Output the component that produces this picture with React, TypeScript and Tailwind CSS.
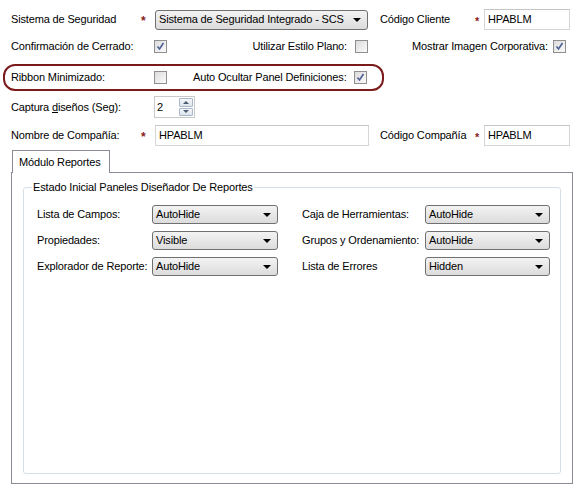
import React from 'react';

const font = { fontFamily: '"Liberation Sans", Arial, sans-serif' };

function Star() {
  return <span className="w-[14px] text-[#8a1c1c] font-bold text-[12px] leading-none pt-[3px]">*</span>;
}

function Check({ checked }: { checked?: boolean }) {
  return (
    <span className="w-[13px] h-[13px] border border-[#8f8f8f] bg-gradient-to-br from-[#dcdcdc] to-[#fbfbfb] flex items-center justify-center shrink-0">
      {checked && (
        <svg width="9" height="9" viewBox="0 0 9 9">
          <path d="M1.5 4.5 L3.5 7 L7.5 1" fill="none" stroke="#4d5f95" strokeWidth="1.6" />
        </svg>
      )}
    </span>
  );
}

function Select({ value, w, h = 20 }: { value: string; w: string; h?: number }) {
  return (
    <div
      className={`${w} flex items-center border border-[#707070] rounded-[3px] bg-gradient-to-b from-[#f3f3f3] to-[#dcdcdc] pl-[3px] pr-[6px] shrink-0`}
      style={{ height: h }}
    >
      <span className="flex-1">{value}</span>
      <svg width="8" height="4" viewBox="0 0 8 4" className="ml-[4px] shrink-0">
        <path d="M0 0 H8 L4 4 Z" fill="#000" />
      </svg>
    </div>
  );
}

function TextBox({ value, w }: { value: string; w: string }) {
  return (
    <div className={`${w} h-[21px] border border-[#d6d6d6] border-t-[#c5c5c5] bg-white flex items-center pl-[3px] shrink-0`}>
      <span>{value}</span>
    </div>
  );
}

export default function App() {
  return (
    <div className="w-[580px] h-[493px] bg-white text-[11px] tracking-[-0.15px] text-black overflow-hidden whitespace-nowrap" style={font}>
      {/* Row 1 */}
      <div className="flex items-center h-[21px] mt-[9px] pl-[11px]">
        <span className="w-[130px]">Sistema de Seguridad</span>
        <Star />
        <Select value="Sistema de Seguridad Integrado - SCS" w="w-[213px]" />
        <span className="ml-[12px] w-[95px]">Código Cliente</span>
        <span className="w-[9px] text-[#8a1c1c] font-bold leading-none pt-[3px]">*</span>
        <TextBox value="HPABLM" w="w-[86px]" />
      </div>

      {/* Row 2 */}
      <div className="flex items-center h-[14px] mt-[9px] pl-[11px]">
        <span className="w-[143px]">Confirmación de Cerrado:</span>
        <Check checked />
        <span className="w-[188px] text-right pr-[8px]">Utilizar Estilo Plano:</span>
        <Check />
        <span className="w-[185px] text-right pr-[5px]">Mostrar Imagen Corporativa:</span>
        <Check checked />
      </div>

      {/* Row 3 */}
      <div className="mt-[11px] ml-[3px] w-[381px] h-[27px] border-2 border-[#7b1a1a] rounded-[12px] flex items-center pl-[6px]">
        <span className="w-[143px]">Ribbon Minimizado:</span>
        <Check />
        <span className="ml-[26px] w-[161px]">Auto Ocultar Panel Definiciones:</span>
        <Check checked />
      </div>

      {/* Row 4 */}
      <div className="flex items-center h-[22px] mt-[5px] pl-[11px]">
        <span className="w-[143px]">
          Captura <span className="underline">d</span>iseños (Seg):
        </span>
        <div className="w-[41px] h-[22px] border border-[#c9c9c9] flex items-center pl-[2px] pr-[1px]">
          <span className="flex-1">2</span>
          <div className="flex flex-col w-[14px] h-[18px] gap-[1px]">
            {[0, 1].map((i) => (
              <div key={i} className="flex-1 border border-[#a9b7c9] rounded-[1px] bg-gradient-to-b from-[#f5f7fa] to-[#dde4ec] flex items-center justify-center">
                <svg width="6" height="3" viewBox="0 0 6 3">
                  <path d={i === 0 ? 'M0 3 H6 L3 0 Z' : 'M0 0 H6 L3 3 Z'} fill="#4a5a73" />
                </svg>
              </div>
            ))}
          </div>
        </div>
      </div>

      {/* Row 5 */}
      <div className="flex items-center h-[21px] mt-[7px] pl-[11px]">
        <span className="w-[130px]">Nombre de Compañía:</span>
        <Star />
        <TextBox value="HPABLM" w="w-[214px]" />
        <span className="ml-[11px] w-[95px]">Código Compañía</span>
        <span className="w-[9px] text-[#8a1c1c] font-bold leading-none pt-[3px]">*</span>
        <TextBox value="HPABLM" w="w-[86px]" />
      </div>

      {/* Tabs */}
      <div className="ml-[11px] mt-[3px] w-[562px]">
        <div className="flex">
          <div className="ml-[1px] w-[98px] h-[23px] border border-b-0 border-[#898c95] bg-white flex items-center pl-[6px] relative top-[1px]">
            Módulo Reportes
          </div>
        </div>
        <div className="h-[312px] border border-[#898c95] pt-[14px] px-[11px] pb-[9px]">
          <div className="h-full border border-[#d5dfe5] rounded-[3px] relative pt-[17px] pl-[13px]">
            <span className="absolute -top-[8px] left-[8px] bg-white px-[1px] leading-[14px]">
              Estado Inicial Paneles Diseñador De Reportes
            </span>
            <div className="flex">
              <div className="flex flex-col gap-[7px] w-[265px]">
                {[
                  ['Lista de Campos:', 'AutoHide'],
                  ['Propiedades:', 'Visible'],
                  ['Explorador de Reporte:', 'AutoHide'],
                ].map(([l, v]) => (
                  <div key={l} className="flex items-center">
                    <span className="w-[115px]">{l}</span>
                    <Select value={v} w="w-[126px]" h={19} />
                  </div>
                ))}
              </div>
              <div className="flex flex-col gap-[7px]">
                {[
                  ['Caja de Herramientas:', 'AutoHide'],
                  ['Grupos y Ordenamiento:', 'AutoHide'],
                  ['Lista de Errores', 'Hidden'],
                ].map(([l, v]) => (
                  <div key={l} className="flex items-center">
                    <span className="w-[123px]">{l}</span>
                    <Select value={v} w="w-[125px]" h={19} />
                  </div>
                ))}
              </div>
            </div>
          </div>
        </div>
      </div>
    </div>
  );
}
